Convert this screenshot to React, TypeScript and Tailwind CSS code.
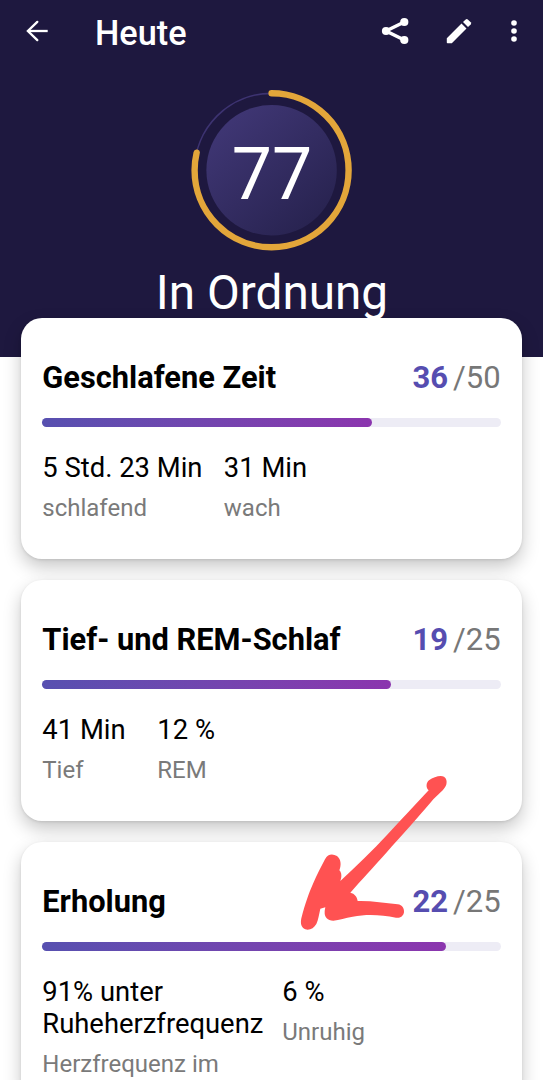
import React from "react";

interface Stat {
  value: string;
  label: string;
  width: string;
}

interface ScoreCard {
  title: string;
  score: number;
  max: number;
  percent: number;
  stats: Stat[];
}

const cards: ScoreCard[] = [
  {
    title: "Geschlafene Zeit",
    score: 36,
    max: 50,
    percent: 72,
    stats: [
      { value: "5 Std. 23 Min", label: "schlafend", width: "w-[181.5px]" },
      { value: "31 Min", label: "wach", width: "w-[120px]" },
    ],
  },
  {
    title: "Tief- und REM-Schlaf",
    score: 19,
    max: 25,
    percent: 76,
    stats: [
      { value: "41 Min", label: "Tief", width: "w-[115px]" },
      { value: "12 %", label: "REM", width: "w-[120px]" },
    ],
  },
  {
    title: "Erholung",
    score: 22,
    max: 25,
    percent: 88,
    stats: [
      {
        value: "91% unter Ruheherzfrequenz",
        label: "Herzfrequenz im",
        width: "w-[240px]",
      },
      { value: "6 %", label: "Unruhig", width: "w-[120px]" },
    ],
  },
];

const BackIcon = () => (
  <svg width="24" height="24" viewBox="0 0 24 24" fill="none" stroke="white">
    <path d="M12.3 2.9 2.9 12l9.4 9.1" strokeWidth="2.3" strokeLinecap="round" />
    <path d="M3 12h19.7" strokeWidth="2.3" />
  </svg>
);

const ShareIcon = () => (
  <svg width="28" height="28" viewBox="0 0 28 28" fill="white">
    <path d="M23.3 5 5 14l18.3 9" fill="none" stroke="white" strokeWidth="3.5" />
    <circle cx="5" cy="14" r="4.1" />
    <circle cx="23.3" cy="5" r="4.1" />
    <circle cx="23.3" cy="23" r="4.1" />
  </svg>
);

const EditIcon = () => (
  <svg width="26" height="26" viewBox="0 0 26 26" fill="white">
    <path d="M.8 20.3 15.5 5.6l5 5L5.8 25.2H1.5a.7.7 0 0 1-.7-.7z" />
    <path d="m17 4.1 2.7-2.7a1.5 1.5 0 0 1 2.1 0l2.9 2.9a1.5 1.5 0 0 1 0 2.1L22 9.1z" />
  </svg>
);

const MoreIcon = () => (
  <svg width="6" height="24" viewBox="0 0 6 24" fill="white">
    <circle cx="3" cy="4" r="2.8" />
    <circle cx="3" cy="12" r="2.8" />
    <circle cx="3" cy="20" r="2.8" />
  </svg>
);

const ScoreRing = () => (
  <div className="relative h-[162px] w-[162px]">
    <svg width="162" height="162" viewBox="0 0 162 162" fill="none">
      <defs>
        <linearGradient id="disc" x1="0.15" y1="0.1" x2="0.85" y2="0.9">
          <stop offset="0" stopColor="#3f3674" />
          <stop offset="1" stopColor="#282350" />
        </linearGradient>
      </defs>
      <circle cx="80.6" cy="81.3" r="77" stroke="#3d3371" strokeWidth="1.7" />
      <circle cx="80.6" cy="81.3" r="65.2" fill="url(#disc)" />
      <circle
        cx="80.6"
        cy="81.3"
        r="77"
        pathLength="100"
        stroke="#e3a63a"
        strokeWidth="6.4"
        strokeLinecap="round"
        strokeDasharray="78.7 100"
        transform="rotate(-90 80.6 81.3)"
      />
    </svg>
    <span className="absolute inset-0 flex items-center justify-center pl-px pt-[9px] text-[71.5px] leading-none">
      77
    </span>
  </div>
);

const Card = ({ title, score, max, percent, stats }: ScoreCard) => (
  <section className="min-h-[240.5px] shrink-0 rounded-[21px] bg-white px-[21px] pb-6 pt-[40px] shadow-[0_8px_18px_rgba(0,0,0,0.22),0_1px_3px_rgba(0,0,0,0.1)]">
    <div className="flex h-[38px] items-center justify-between whitespace-nowrap">
      <h2 className="pt-[2px] text-[30.8px] font-bold leading-[38px] text-black">{title}</h2>
      <p className="pt-[2px] text-[31px] leading-[38px] text-[#777777]">
        <span className="mr-[5px] font-bold text-[#564db0]">{score}</span>/{max}
      </p>
    </div>
    <div className="mt-[21.3px] h-[9.3px] rounded-full bg-[#edecf5]">
      <div
        className="h-full rounded-full bg-linear-to-r from-[#5750b0] to-[#8b35ae]"
        style={{ width: `${percent}%` }}
      />
    </div>
    <div className="mt-[25px] flex">
      {stats.map((stat) => (
        <div key={stat.label} className={"shrink-0 " + stat.width}>
          <p className="text-[27.4px] leading-[32.6px] text-black">{stat.value}</p>
          <p className="mt-[9.2px] text-[24px] leading-[28px] text-[#7a7a7a]">{stat.label}</p>
        </div>
      ))}
    </div>
  </section>
);

// hand drawn marker arrow over the recovery card
const MarkerArrow = () => (
  <svg
    className="absolute left-[280px] top-[760px]"
    width="263"
    height="200"
    viewBox="0 0 789 600"
    fill="#ff5252"
  >
    <path d="M446 91C437 84 438 68 447 61C461 50 482 45 492 50C502 56 502 72 495 82C486 96 468 108 455 124C407 181 360 232 321 276C281 321 246 358 211 398C224 401 231 410 233 423C275 422 313 429 353 433C367 435 373 445 372 457C370 470 359 475 348 473C303 464 260 462 218 470C196 474 178 480 160 482C143 482 133 471 134 457C134 451 135 447 136 442L121 446C117 463 115 479 109 492C102 505 88 512 76 508C63 503 61 490 64 475C76 429 86 401 100 369C111 343 123 322 135 298C144 281 158 281 171 288C184 298 184 317 178 331C185 337 186 350 181 363C229 320 277 272 323 223C364 179 403 137 446 91Z" />
  </svg>
);

export default function App() {
  return (
    <main className="relative h-[1080px] w-[543px] overflow-hidden bg-white font-[Roboto,sans-serif]">
      <header className="h-[357.4px] bg-[#1e183f] text-white">
        <div className="flex h-[62px] items-center pl-[25px] pr-[26px]">
          <BackIcon />
          <h1 className="ml-[46px] pt-[5px] text-[34.3px] font-medium leading-none">Heute</h1>
          <div className="ml-auto flex items-center">
            <ShareIcon />
            <div className="ml-[36.5px]">
              <EditIcon />
            </div>
            <div className="ml-[39.5px]">
              <MoreIcon />
            </div>
          </div>
        </div>
        <div className="mt-[27.3px] flex flex-col items-center">
          <ScoreRing />
          <p className="relative z-10 mt-[13.7px] pl-px text-[47.7px] leading-[56px]">In Ordnung</p>
        </div>
      </header>
      <div className="-mt-[39.1px] flex flex-col gap-[21.5px] px-[21.3px]">
        {cards.map((card) => (
          <Card key={card.title} {...card} />
        ))}
      </div>
      <MarkerArrow />
    </main>
  );
}
